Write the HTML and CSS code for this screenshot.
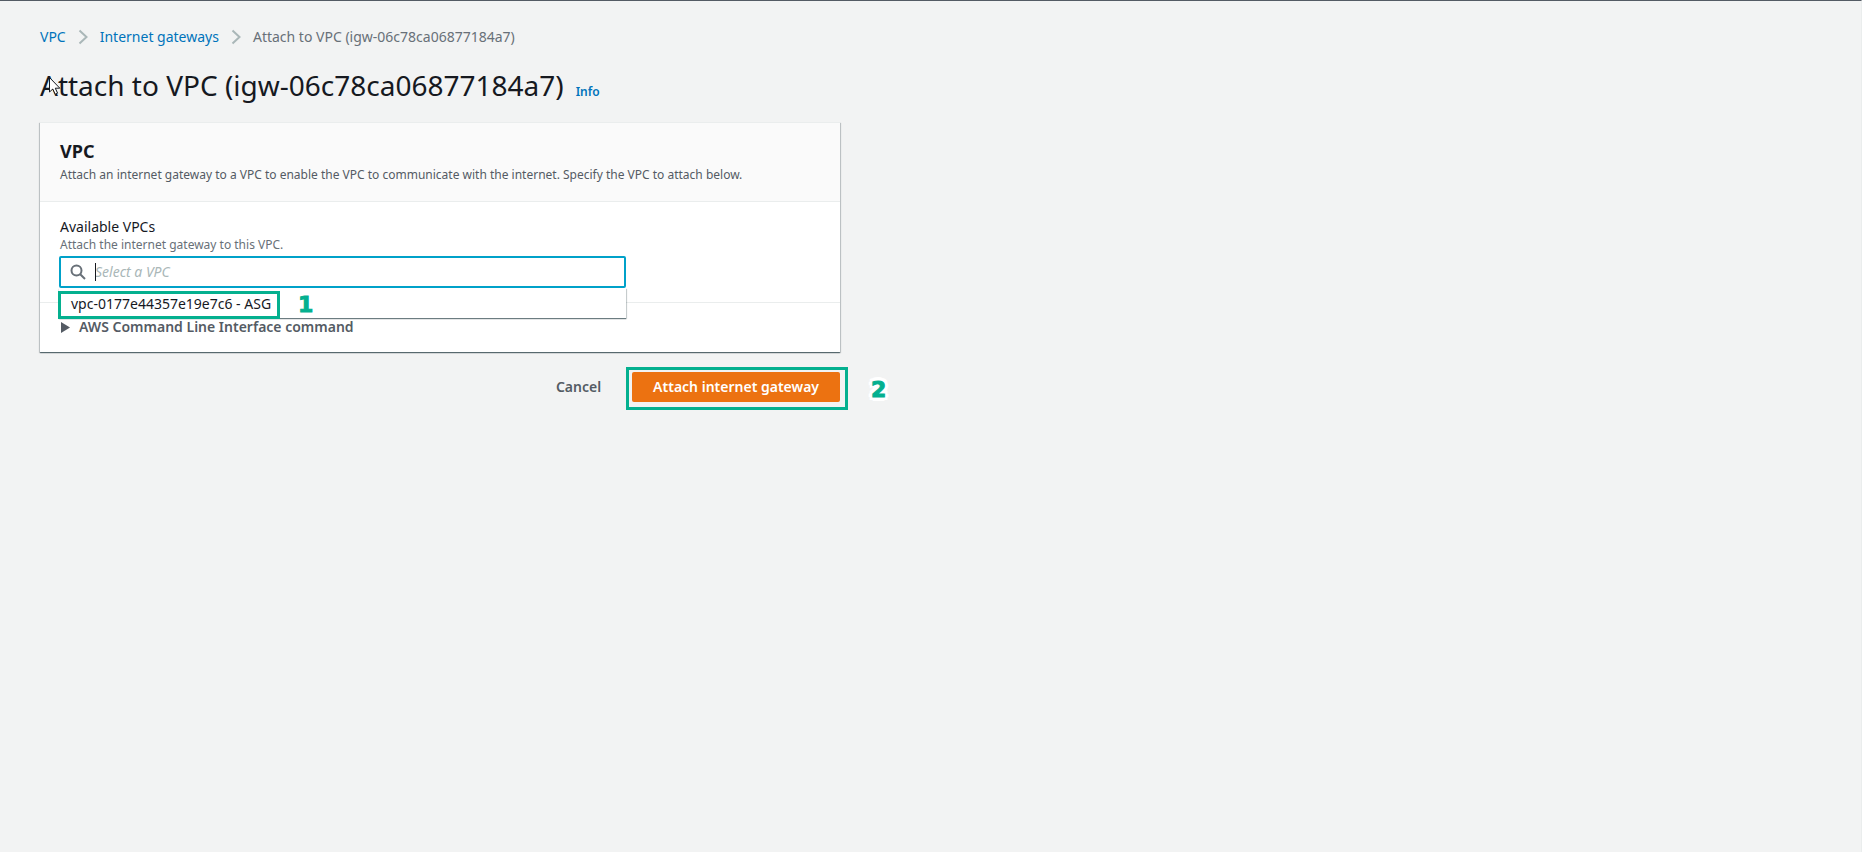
FILE: index.html
```
<!DOCTYPE html>
<html lang="en">
<head>
  <meta charset="UTF-8">
  <meta name="viewport" content="width=device-width, initial-scale=1">
  <title>Attach to VPC</title>
  <link rel="stylesheet" href="styles.css">
</head>
<body>

  <main class="page">
    <!-- Breadcrumbs -->
    <nav class="breadcrumbs" aria-label="Breadcrumbs">
      <a href="#">VPC</a>
      <svg class="chevron" width="10" height="16" viewBox="0 0 10 16" aria-hidden="true"><path d="M1.500 1.500L8.500 8L1.500 14.500"/></svg>
      <a href="#">Internet gateways</a>
      <svg class="chevron" width="10" height="16" viewBox="0 0 10 16" aria-hidden="true"><path d="M1.500 1.500L8.500 8L1.500 14.500"/></svg>
      <span>Attach to VPC (igw-06c78ca06877184a7)</span>
    </nav>

    <!-- Title -->
    <header class="title">
      <h1>Attach to VPC (igw-06c78ca06877184a7)</h1>
      <a class="info" href="#">Info</a>
      <svg class="cursor" width="14" height="20" viewBox="0 0 14 20" aria-hidden="true"><path d="M1.500 1.500V16L4.800 13L7.200 18.200L9.600 17.200L7.300 12.200H11.800Z"/></svg>
    </header>

    <!-- VPC card -->
    <section class="card">
      <div class="card-header">
        <h2>VPC</h2>
        <p>Attach an internet gateway to a VPC to enable the VPC to communicate with the internet. Specify the VPC to attach below.</p>
      </div>
      <div class="card-body">
        <label for="vpc">Available VPCs</label>
        <p id="vpc-hint">Attach the internet gateway to this VPC.</p>
        <div class="select">
          <div class="search">
            <svg class="search-icon" width="16" height="16" viewBox="0 0 16 16" aria-hidden="true"><circle cx="6.500" cy="6.500" r="5"/><path d="M10.200 10.200L15 15"/></svg>
            <input id="vpc" type="text" placeholder="Select a VPC" aria-describedby="vpc-hint">
            <span class="caret"></span>
          </div>
          <div class="dropdown">
            <button class="option mark" type="button">vpc-0177e44357e19e7c6 - ASG</button>
            <span class="step">1</span>
          </div>
        </div>
      </div>
      <div class="card-footer">
        <button class="expander" type="button">
          <svg width="9" height="11" viewBox="0 0 9 11" aria-hidden="true"><path d="M0 0L9 5.500L0 11Z"/></svg>
          AWS Command Line Interface command
        </button>
      </div>
    </section>

    <!-- Actions -->
    <div class="actions">
      <button class="btn" type="button">Cancel</button>
      <div class="primary-wrap">
        <button class="btn primary" type="button">Attach internet gateway</button>
        <span class="step step-two">2</span>
      </div>
    </div>
  </main>

</body>
</html>
```
FILE: styles.css
```
* {
  margin: 0;
  padding: 0;
  box-sizing: border-box;
}
body {
  min-height: 100vh;
  font-family: "Noto Sans", "Open Sans", sans-serif;
  font-size: 14px;
  line-height: 22px;
  color: #16191f;
  background: #f2f3f3;
  border-top: 1px solid #545b64;
  border-right: 1px solid #eaeded;
}
a {
  color: #0073bb;
  text-decoration: none;
}
button {
  font: inherit;
  border: none;
  background: transparent;
  cursor: pointer;
}
.page {
  max-width: 880px;
  padding: 25px 40px 40px;
}

/* Breadcrumbs */
.breadcrumbs {
  display: flex;
  align-items: center;
  gap: 12px;
  color: #687078;
}
.chevron {
  fill: none;
  stroke: #aab7b8;
  stroke-width: 2;
}

/* Title */
.title {
  position: relative;
  display: flex;
  align-items: baseline;
  gap: 12px;
  margin: 19px 0;
  white-space: nowrap;
}
h1 {
  font-size: 28px;
  font-weight: 400;
  line-height: 36px;
}
.info {
  font-size: 12px;
  font-weight: 600;
}
.cursor {
  position: absolute;
  left: 8px;
  top: 9px;
  fill: #fff;
  stroke: #16191f;
}

/* Card */
.card {
  background: #fff;
  border-top: 1px solid #eaeded;
  box-shadow: 0 1px 1px 0 rgba(0, 28, 36, 0.5), 1px 1px 1px 0 rgba(0, 28, 36, 0.15), -1px 1px 1px 0 rgba(0, 28, 36, 0.15);
}
.card-header {
  padding: 17px 20px 18px;
  background: #fafafa;
  border-bottom: 1px solid #eaeded;
}
h2 {
  margin-bottom: 5px;
  font-size: 18px;
  font-weight: 700;
  line-height: 22px;
}
.card p {
  font-size: 12px;
  line-height: 16px;
  color: #545b64;
}
.card-body {
  padding: 15px 20px 14px;
}
.card-body label {
  display: block;
  line-height: 20px;
}
.card-body p {
  margin-bottom: 3px;
  color: #687078;
}

/* Select with open list */
.select {
  position: relative;
  width: calc(75% - 3px);
  margin-left: -1px;
}
.search {
  position: relative;
  display: flex;
  align-items: center;
  gap: 9px;
  height: 32px;
  padding: 0 9px;
  background: #fff;
  border: 2px solid #00a1c9;
  border-radius: 2px;
}
.search-icon {
  fill: none;
  stroke: #687078;
  stroke-width: 2;
}
.search input {
  flex: 1;
  border: none;
  outline: none;
  background: transparent;
  font: inherit;
  color: #16191f;
}
.search input::placeholder {
  font-style: italic;
  color: #aab7b8;
  opacity: 1;
}
.caret {
  position: absolute;
  left: 34px;
  top: 5px;
  width: 1px;
  height: 18px;
  background: #16191f;
}
.dropdown {
  position: absolute;
  z-index: 1;
  top: 100%;
  left: 0;
  right: 0;
  display: flex;
  align-items: center;
  gap: 18px;
  height: 30px;
  padding-top: 3px;
  background: #fff;
  box-shadow: 0 1px 1px 0 rgba(0, 28, 36, 0.5), 1px 1px 1px 0 rgba(0, 28, 36, 0.15);
}
.option {
  height: 28px;
  margin-left: -1px;
  padding: 0 6px 2px 10px;
  line-height: 20px;
  color: #16191f;
  white-space: nowrap;
}
.mark {
  border: 3px solid #04b08f;
}
.step {
  font-family: "DejaVu Sans", sans-serif;
  font-size: 22px;
  font-weight: 700;
  color: #04b08f;
  -webkit-text-stroke: 1px #04b08f;
}

/* Footer of the card */
.card-footer {
  padding: 13px 20px 14px;
  border-top: 1px solid #eaeded;
}
.expander {
  display: flex;
  align-items: center;
  gap: 9px;
  padding-left: 1px;
  font-weight: 600;
  color: #545b64;
}
.expander svg {
  fill: #545b64;
}

/* Actions */
.actions {
  display: flex;
  justify-content: flex-end;
  gap: 10px;
  margin-top: 20px;
}
.btn {
  height: 30px;
  padding: 0 21px;
  font-weight: 600;
  color: #545b64;
  border-radius: 2px;
}
.primary-wrap {
  position: relative;
}
.primary-wrap::after {
  content: "";
  position: absolute;
  inset: -5px -8px -8px -6px;
  border: 3px solid #04b08f;
  pointer-events: none;
}
.primary {
  color: #fff;
  background: #ec7211;
}
.step-two {
  position: absolute;
  left: calc(100% + 31px);
  top: 7px;
  text-shadow: 4px 0 #fff, -4px 0 #fff, 0 4px #fff, 0 -4px #fff, 3px 3px #fff, -3px -3px #fff, 3px -3px #fff, -3px 3px #fff;
}
```
